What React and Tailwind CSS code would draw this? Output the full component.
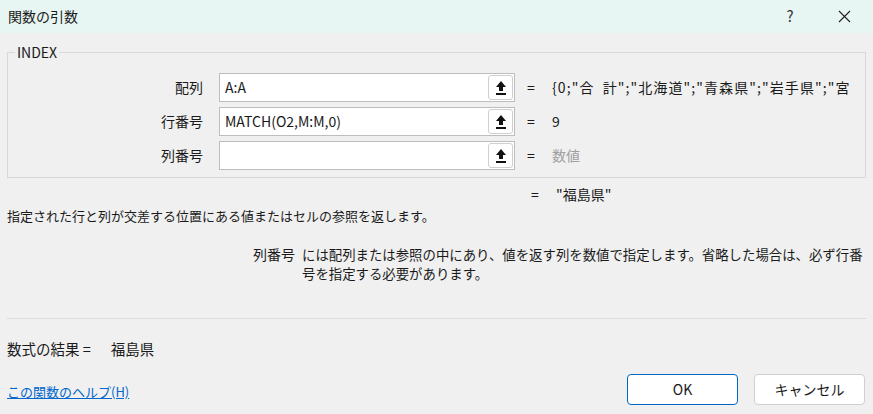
import React from 'react';

const font = { fontFamily: '"Noto Sans CJK JP", "Noto Sans", sans-serif' };

const RefIcon = () => (
  <svg width="12" height="16" viewBox="0 0 12 16">
    <path d="M6 1 L11 7 L8 7 L8 11 L4 11 L4 7 L1 7 Z" fill="#111" />
    <rect x="1" y="13" width="10" height="2" fill="#111" />
  </svg>
);

const ArgRow = ({ label, value, result, muted, wide }) => (
  <div className="flex items-center h-[29px]">
    <div className="w-[196px] pr-[1px] text-right text-[14px] text-[#1a1a1a]">{label}</div>
    <div className="ml-[15px] w-[296px] h-[29px] bg-white border border-[#bdbdbd] flex items-center pl-[5px] pr-[1px]">
      <div className="flex-1 text-[14px] text-[#1a1a1a] whitespace-nowrap overflow-hidden">{value}</div>
      <button className="w-[25px] h-[25px] rounded-[3px] border border-[#cfcfcf] bg-white flex items-center justify-center">
        <RefIcon />
      </button>
    </div>
    <div className="ml-[12px] w-[14px] text-[14px] text-[#1a1a1a]">=</div>
    <div
      className={`ml-[11px] w-[301px] overflow-hidden whitespace-nowrap text-[14px] ${wide ? 'tracking-[1.1px]' : ''} ${muted ? 'text-[#a0a0a0]' : 'text-[#1a1a1a]'}`}
    >
      {result}
    </div>
  </div>
);

export default function App() {
  return (
    <div className="w-[873px] h-[414px] bg-[#f0f0f0] flex flex-col overflow-hidden" style={font}>
      <div className="h-[33px] bg-[#e7f6f3] flex items-center pl-[8px] text-[14px] text-[#1a1a1a]">
        <span className="flex-1">関数の引数</span>
        <span className="w-[20px] text-center mr-[38px] text-[15px] text-[#333]">?</span>
        <svg width="13" height="13" viewBox="0 0 13 13" className="mr-[22px]">
          <path d="M1 1 L12 12 M12 1 L1 12" stroke="#222" strokeWidth="1.1" />
        </svg>
      </div>

      <fieldset className="mt-[9px] mx-[7px] w-[859px] border border-[#d8d8d8] pt-[11px] pb-[7px] flex flex-col gap-[5px]">
        <legend className="ml-[7px] px-[2px] text-[14px] leading-[20px] text-[#1a1a1a]">INDEX</legend>
        <ArgRow label="配列" value="A:A" result={'{0;"合\u2002計";"北海道";"青森県";"岩手県";"宮'} wide />
        <ArgRow label="行番号" value="MATCH(O2,M:M,0)" result="9" />
        <ArgRow label="列番号" value="" result="数値" muted />
      </fieldset>

      <div className="flex items-center h-[20px] mt-[6px] text-[14px] text-[#1a1a1a]">
        <span className="ml-[531px] w-[14px]">=</span>
        <span className="ml-[11px]">"福島県"</span>
      </div>
      <div className="ml-[7px] mt-[2px] text-[13px] leading-[20px] text-[#1a1a1a]">
        指定された行と列が交差する位置にある値またはセルの参照を返します。
      </div>

      <div className="flex mt-[19px] text-[13.4px] leading-[19px] text-[#1a1a1a]">
        <div className="ml-[253px] w-[49px] text-[14px]">列番号</div>
        <div>
          には配列または参照の中にあり、値を返す列を数値で指定します。省略した場合は、必ず行番
          <br />
          号を指定する必要があります。
        </div>
      </div>

      <div className="mt-[35px] mx-[7px] border-t border-[#dcdcdc]" />

      <div className="flex items-center ml-[7px] mt-[20px] h-[20px] text-[14.5px] text-[#1a1a1a]">
        <span>数式の結果 =</span>
        <span className="ml-[20px]">福島県</span>
      </div>

      <div className="flex items-center mt-[15px]">
        <a href="#" className="ml-[7px] mt-[4px] text-[13px] text-[#0066cc] underline">この関数のヘルプ(H)</a>
        <div className="flex-1" />
        <button className="w-[111px] h-[31px] rounded-[4px] border border-[#0067c0] bg-white text-[14px] text-[#1a1a1a]">OK</button>
        <button className="ml-[16px] mr-[8px] w-[111px] h-[31px] rounded-[4px] border border-[#d0d0d0] bg-white text-[14px] text-[#1a1a1a]">キャンセル</button>
      </div>
    </div>
  );
}
